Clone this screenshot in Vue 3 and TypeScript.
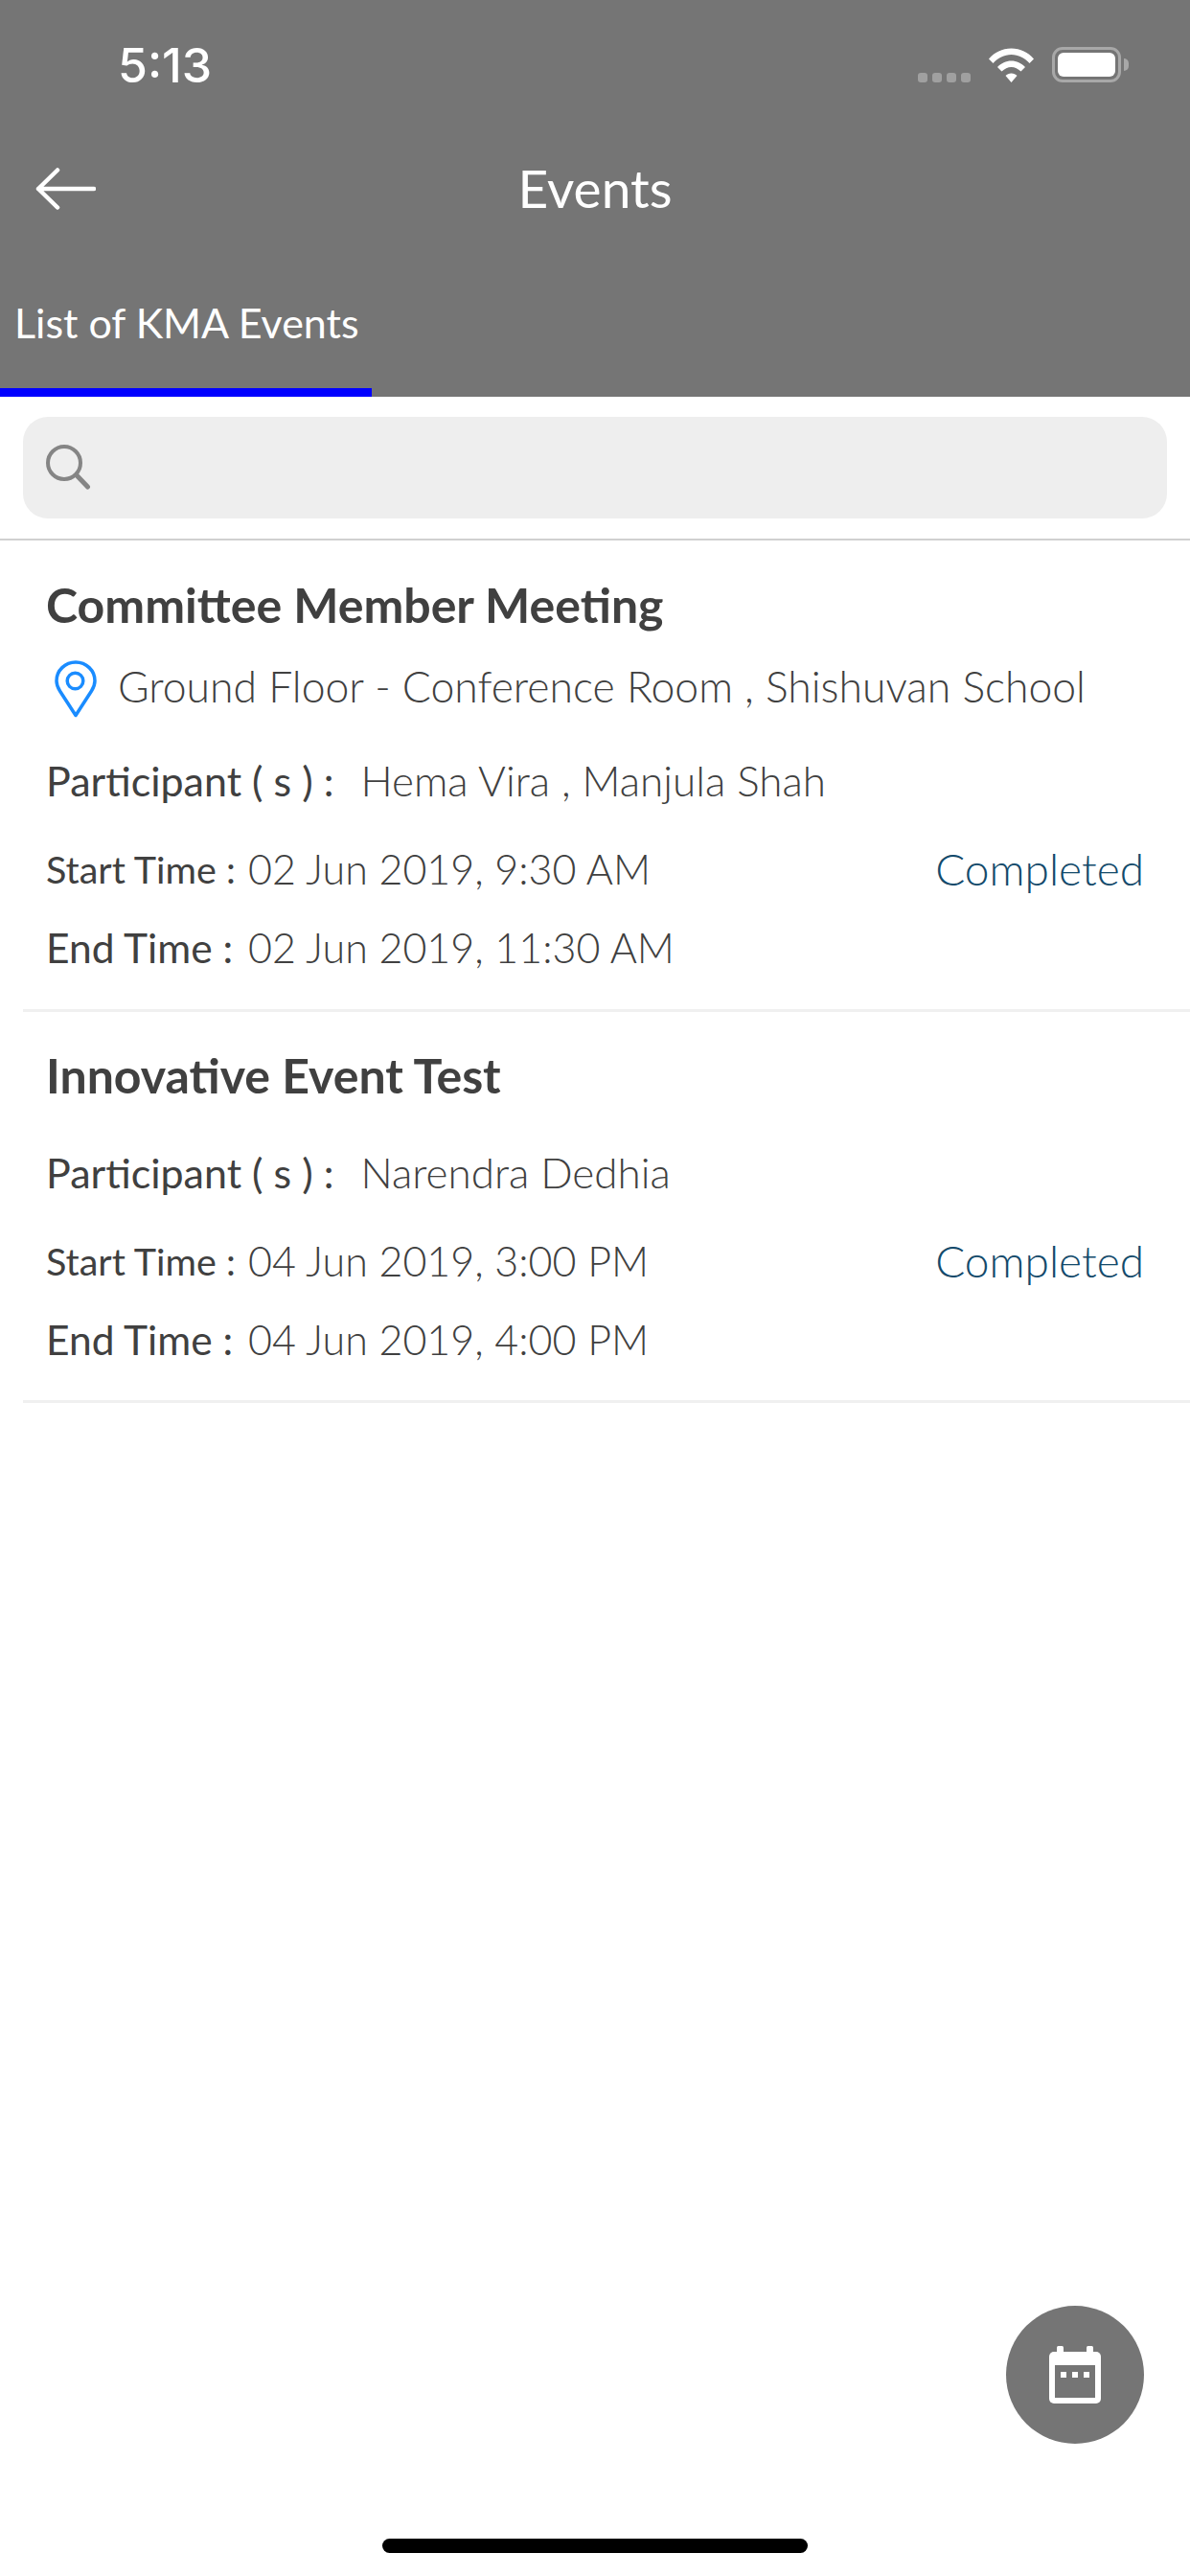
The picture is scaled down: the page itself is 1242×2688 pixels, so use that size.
<script setup lang="ts">
interface EventItem {
  id: number
  title: string
  location?: string
  participants: string
  start: string
  end: string
  status: string
}

const events: EventItem[] = [
  {
    id: 1,
    title: 'Committee Member Meeting',
    location: 'Ground Floor - Conference Room , Shishuvan School',
    participants: 'Hema Vira , Manjula Shah',
    start: '02 Jun 2019, 9:30 AM',
    end: '02 Jun 2019, 11:30 AM',
    status: 'Completed',
  },
  {
    id: 2,
    title: 'Innovative Event Test',
    participants: 'Narendra Dedhia',
    start: '04 Jun 2019, 3:00 PM',
    end: '04 Jun 2019, 4:00 PM',
    status: 'Completed',
  },
]
</script>

<template>
  <div class="screen">
    <header class="header">
      <div class="status-bar">
        <span class="clock">5:13</span>
        <div class="status-icons">
          <div class="signal"><i></i><i></i><i></i><i></i></div>
          <svg class="wifi" width="47" height="36" viewBox="0 0 47 36">
            <path d="M0 11.500C6 4.500 14 0.500 23.500 0.500C33 0.500 41 4.500 47 11.500L42.500 16C37.500 10.500 31 7 23.500 7C16 7 9.500 10.500 4.500 16Z" fill="#fff" />
            <path d="M9 20C13 16 18 13.500 23.500 13.500C29 13.500 34 16 38 20L33.500 24.500C30.500 21.800 27.200 20 23.500 20C19.800 20 16.500 21.800 13.500 24.500Z" fill="#fff" />
            <path d="M17.500 29C19 27.500 21 26.500 23.500 26.500C26 26.500 28 27.500 29.500 29L23.500 36Z" fill="#fff" />
          </svg>
          <div class="battery"><div class="battery-fill"></div></div>
        </div>
      </div>
      <div class="nav">
        <svg class="back" width="63" height="44" viewBox="0 0 63 44">
          <path d="M61 22H3M23 2.500L3 22L23 41.500" fill="none" stroke="#fff" stroke-width="4.500" stroke-linecap="round" stroke-linejoin="round" />
        </svg>
        <h1 class="nav-title">Events</h1>
      </div>
      <div class="tabs">
        <div class="tab">List of KMA Events</div>
      </div>
    </header>

    <div class="search-wrap">
      <div class="search">
        <svg width="48" height="48" viewBox="0 0 48 48">
          <circle cx="19" cy="19" r="17" fill="none" stroke="#858585" stroke-width="4" />
          <path d="M32 32L43.500 44" fill="none" stroke="#858585" stroke-width="5" stroke-linecap="round" />
        </svg>
      </div>
    </div>

    <section class="list">
      <article v-for="item in events" :key="item.id" class="card">
        <h2 class="title">{{ item.title }}</h2>
        <div v-if="item.location" class="location">
          <svg class="pin" width="44" height="60" viewBox="0 0 44 60">
            <path d="M22 57.500L5.500 32C3 28 2 25 2 21.500C2 10.500 11 2 22 2C33 2 42 10.500 42 21.500C42 25 41 28 38.500 32Z" fill="none" stroke="#1a8cff" stroke-width="3.500" stroke-linejoin="round" />
            <circle cx="21.500" cy="21.500" r="8.300" fill="none" stroke="#1a8cff" stroke-width="3.500" />
          </svg>
          <span>{{ item.location }}</span>
        </div>
        <div class="participants">
          <span class="label">Participant ( s ) :</span>
          <span class="names">{{ item.participants }}</span>
        </div>
        <div class="time-row">
          <div class="time-cell"><span class="time-label">Start Time :</span><span class="time">{{ item.start }}</span></div>
          <span class="status">{{ item.status }}</span>
        </div>
        <div class="time-row end">
          <div class="time-cell"><span class="time-label">End Time :</span><span class="time">{{ item.end }}</span></div>
        </div>
      </article>
    </section>

    <button class="fab" type="button" aria-label="Calendar">
      <svg width="54" height="60" viewBox="0 0 54 60">
        <rect x="0" y="6" width="54" height="54" rx="5" fill="#fff" />
        <rect x="8" y="0" width="7" height="10" rx="1.500" fill="#fff" />
        <rect x="39" y="0" width="7" height="10" rx="1.500" fill="#fff" />
        <rect x="6" y="20" width="42" height="34" fill="#757575" />
        <rect x="12" y="27" width="6" height="6" fill="#fff" />
        <rect x="24" y="27" width="6" height="6" fill="#fff" />
        <rect x="36" y="27" width="6" height="6" fill="#fff" />
      </svg>
    </button>

    <div class="home-indicator"></div>
  </div>
</template>

<style scoped>
.screen {
  position: relative;
  width: 1242px;
  height: 2688px;
  background: #fff;
  overflow: hidden;
  font-family: Lato, "Noto Sans", sans-serif;
  color: #404040;
}

.header {
  height: 414px;
  background: #757575;
  color: #fff;
  display: flex;
  flex-direction: column;
}

.status-bar {
  height: 136px;
  flex: none;
  display: flex;
  justify-content: space-between;
  align-items: flex-start;
  padding: 47px 72px 0 123px;
  box-sizing: border-box;
}

.clock {
  font-family: Inter, "Liberation Sans", sans-serif;
  font-size: 50px;
  font-weight: 500;
  line-height: 42px;
}

.status-icons {
  display: flex;
  align-items: flex-end;
  margin-top: 2px;
}

.signal {
  display: flex;
  gap: 5px;
}

.signal i {
  width: 10px;
  height: 10px;
  border-radius: 3px;
  background: #a0a0a0;
}

.wifi {
  margin-left: 19px;
}

.battery {
  position: relative;
  width: 72px;
  height: 37px;
  margin-left: 19px;
  box-sizing: border-box;
  border: 3px solid #a8a8a8;
  border-radius: 11px;
  padding: 3px;
}

.battery::after {
  content: "";
  position: absolute;
  right: -11px;
  top: 9px;
  width: 5px;
  height: 13px;
  border-radius: 0 5px 5px 0;
  background: #a8a8a8;
}

.battery-fill {
  width: 100%;
  height: 100%;
  border-radius: 6px;
  background: #fff;
}

.nav {
  height: 120px;
  flex: none;
  display: flex;
  align-items: center;
  justify-content: center;
  position: relative;
}

.back {
  position: absolute;
  left: 37px;
  top: 39px;
}

.nav-title {
  margin: 0;
  font-size: 55px;
  font-weight: 400;
}

.tabs {
  flex: 1;
  display: flex;
}

.tab {
  width: 388px;
  box-sizing: border-box;
  padding: 51px 0 0 15px;
  border-bottom: 9px solid #0000ff;
  font-size: 43px;
  line-height: 60px;
  white-space: nowrap;
}

.search-wrap {
  padding: 21px 24px;
  border-bottom: 2px solid #d0d0d0;
}

.search {
  height: 106px;
  background: #eee;
  border-radius: 26px;
  display: flex;
  align-items: center;
  padding-left: 24px;
}

.card {
  margin-left: 24px;
  padding: 0 48px 0 24px;
  height: 492px;
  box-sizing: border-box;
  border-bottom: 3px solid #f0f0f0;
}

.card:nth-child(2) {
  height: 408px;
}

.title {
  margin: 0;
  padding-top: 35px;
  font-size: 50px;
  line-height: 64px;
  font-weight: 700;
}

.card:nth-child(2) .title {
  padding-top: 34px;
}

.location {
  display: flex;
  align-items: center;
  margin-top: 18px;
  font-size: 44.500px;
  font-weight: 300;
  white-space: nowrap;
}

.pin {
  margin: 8px 22px 0 9px;
  flex: none;
}

.participants {
  margin-top: 35px;
  font-size: 43px;
  line-height: 60px;
  white-space: nowrap;
}

.title + .participants {
  margin-top: 39px;
}

.names {
  margin-left: 28px;
  font-size: 44px;
  font-weight: 300;
}

.time-row {
  display: flex;
  justify-content: space-between;
  margin-top: 32px;
  line-height: 60px;
  white-space: nowrap;
}

.time-row.end {
  margin-top: 22px;
}

.time-cell {
  display: flex;
}

.time-label {
  width: 211px;
  font-size: 39.500px;
}

.end .time-label {
  font-size: 42.500px;
}

.time {
  font-size: 43px;
  font-weight: 300;
}

.status {
  font-size: 46px;
  font-weight: 300;
  color: #134a6b;
}

.fab {
  position: absolute;
  left: 1050px;
  top: 2406px;
  width: 144px;
  height: 144px;
  border: 0;
  padding: 0;
  border-radius: 50%;
  background: #757575;
  display: flex;
  align-items: center;
  justify-content: center;
}

.home-indicator {
  position: absolute;
  left: 399px;
  top: 2649px;
  width: 444px;
  height: 15px;
  border-radius: 8px;
  background: #000;
}
</style>

<style>
body {
  margin: 0;
}
</style>
